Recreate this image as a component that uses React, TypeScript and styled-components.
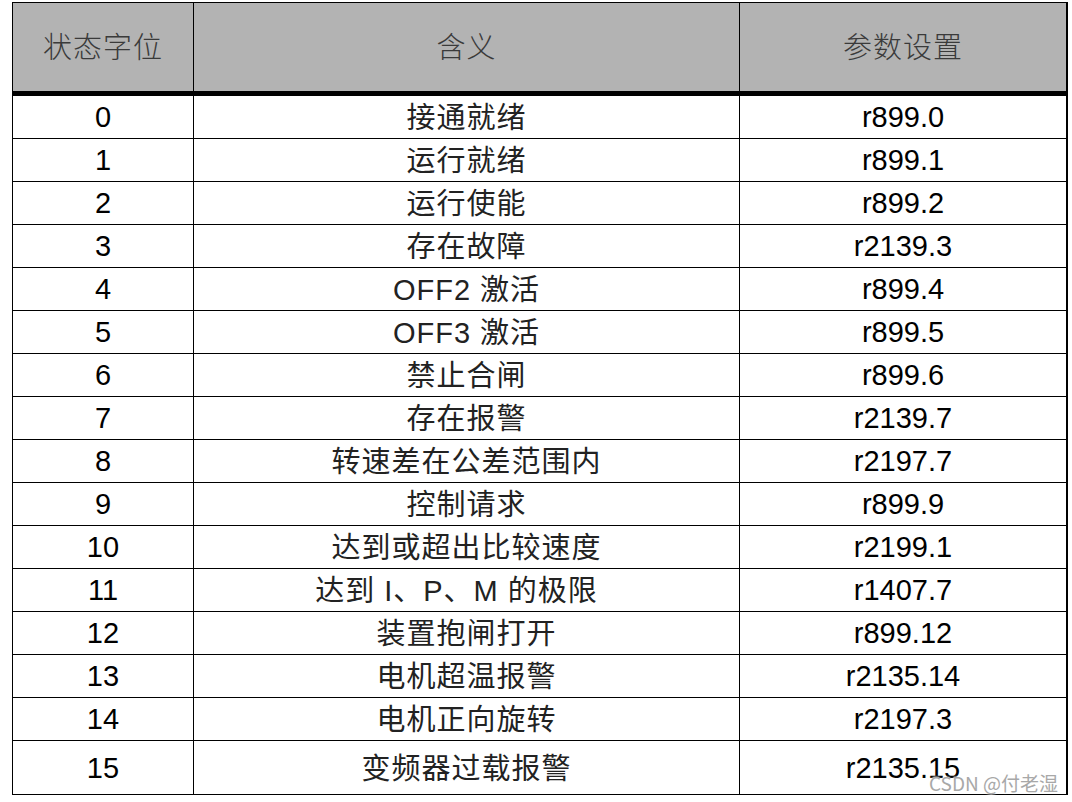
import styled, { createGlobalStyle } from "styled-components"

const GlobalStyle = createGlobalStyle`
  html, body {
    margin: 0;
    padding: 0;
    background: #ffffff;
  }
`

interface Row {
  bit: string
  meaning: string
  param: string
  skew?: number
}

const rows: Row[] = [
  { bit: "0", meaning: "接通就绪", param: "r899.0" },
  { bit: "1", meaning: "运行就绪", param: "r899.1" },
  { bit: "2", meaning: "运行使能", param: "r899.2" },
  { bit: "3", meaning: "存在故障", param: "r2139.3" },
  { bit: "4", meaning: "OFF2 激活", param: "r899.4" },
  { bit: "5", meaning: "OFF3 激活", param: "r899.5" },
  { bit: "6", meaning: "禁止合闸", param: "r899.6" },
  { bit: "7", meaning: "存在报警", param: "r2139.7" },
  { bit: "8", meaning: "转速差在公差范围内", param: "r2197.7" },
  { bit: "9", meaning: "控制请求", param: "r899.9" },
  { bit: "10", meaning: "达到或超出比较速度", param: "r2199.1" },
  { bit: "11", meaning: "达到 I、P、M 的极限", param: "r1407.7", skew: 20 },
  { bit: "12", meaning: "装置抱闸打开", param: "r899.12" },
  { bit: "13", meaning: "电机超温报警", param: "r2135.14" },
  { bit: "14", meaning: "电机正向旋转", param: "r2197.3" },
  { bit: "15", meaning: "变频器过载报警", param: "r2135.15" },
]

const Page = styled.div`
  position: relative;
  width: 1072px;
  height: 802px;
  padding: 2px 0 0 12px;
  box-sizing: border-box;
  overflow: hidden;
`

const Grid = styled.div`
  display: grid;
  grid-template-columns: 181px 546px 326px;
  grid-template-rows: 93px repeat(15, 43px) 54px;
  width: fit-content;
  border-top: 1px solid #000;
  border-left: 1px solid #000;
  border-right: 2px solid #000;
`

interface CellProps {
  $last?: boolean
}

const Cell = styled.div<CellProps>`
  display: flex;
  align-items: center;
  justify-content: center;
  box-sizing: border-box;
  border-bottom: 1px solid #000;
  border-right: ${({ $last }) => ($last ? "none" : "1px solid #000")};
  font-family: "Liberation Sans", "Noto Sans CJK SC", sans-serif;
  font-size: 29px;
  color: #000;
  white-space: nowrap;
  padding-top: 1px;
`

const HeadCell = styled(Cell)`
  background: #b3b3b3;
  border-bottom: 5px solid #000;
  color: #3a3a3a;
  font-family: "Noto Sans CJK SC", sans-serif;
  font-weight: 300;
  letter-spacing: 1px;
  padding-top: 0;
  padding-bottom: 4px;
`

interface MeaningProps {
  $skew?: number
}

const Meaning = styled(Cell)<MeaningProps>`
  color: #222;
  letter-spacing: 1px;
  padding-top: 0;
  padding-bottom: 4px;
  padding-right: ${({ $skew }) => ($skew ? `${$skew}px` : "0")};
`

const Watermark = styled.span`
  position: absolute;
  right: 14px;
  bottom: 8px;
  font-family: "Noto Sans CJK SC", "Liberation Sans", sans-serif;
  font-size: 19px;
  line-height: 22px;
  color: #a8a8a8;
  text-shadow: 0 0 2px #fff, 0 0 2px #fff;
`

const App = () => (
  <>
    <GlobalStyle />
    <Page>
      <Grid>
        <HeadCell>状态字位</HeadCell>
        <HeadCell>含义</HeadCell>
        <HeadCell $last>参数设置</HeadCell>
        {rows.map(r => (
          <>
            <Cell key={r.bit + "b"}>{r.bit}</Cell>
            <Meaning key={r.bit + "m"} $skew={r.skew}>
              {r.meaning}
            </Meaning>
            <Cell key={r.bit + "p"} $last>
              {r.param}
            </Cell>
          </>
        ))}
      </Grid>
      <Watermark>CSDN @付老湿</Watermark>
    </Page>
  </>
)

export default App
